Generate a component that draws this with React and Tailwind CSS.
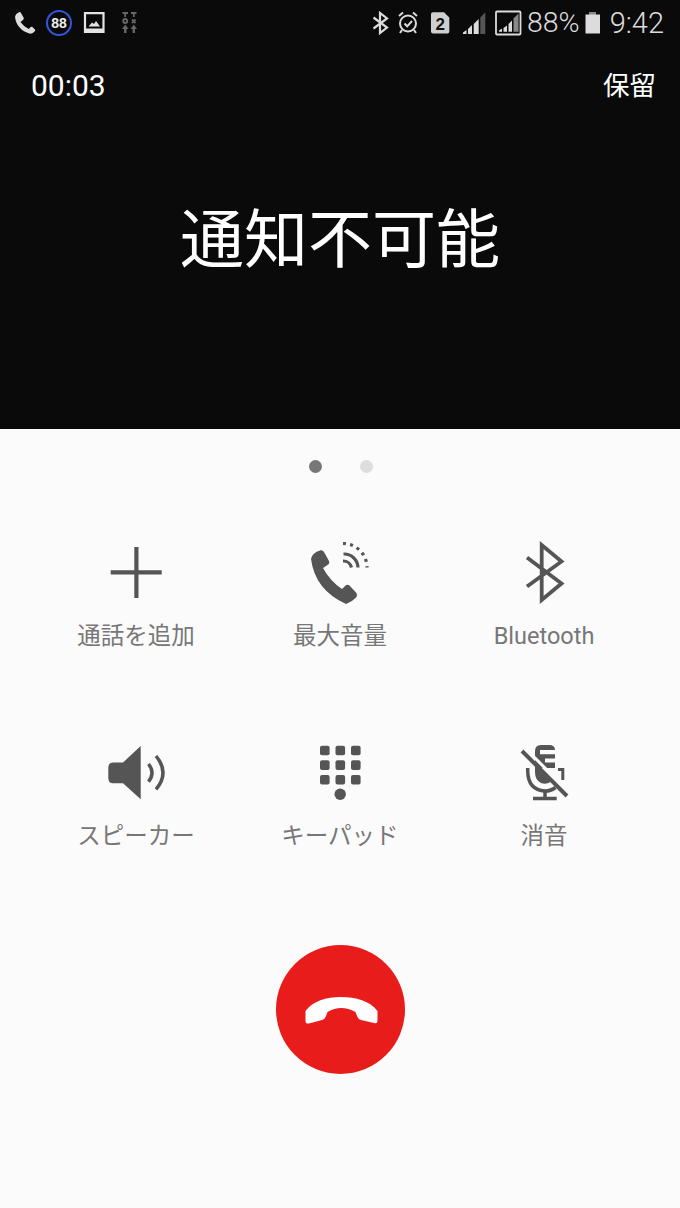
const DARK = "#555555";

function Ic({ x, y, w, h, className = "", children }) {
  return (
    <svg width={w} height={h} viewBox={`${x} ${y} ${w} ${h}`} className={`block shrink-0 ${className}`}>
      {children}
    </svg>
  );
}

function StatusLeft() {
  return (
    <div className="flex items-center">
      <Ic x={14} y={11} w={22} h={24} className="mr-[10px]">
        <path d="M15 17 Q15.5 13.5 19.5 12 Q20.5 11.8 21 13 L23.8 18 Q24 19 23 20 L20.5 22 Q24 27 28.8 29 L30.6 27 Q31.5 26.4 32.4 27 L35 29.5 Q35.5 30.5 34.6 31.5 Q32.5 33.8 30 33.8 Q16.5 29.5 15 17 Z" fill="#dcdcdc" />
      </Ic>
      <div className="mr-[11px] flex h-[26px] w-[26px] items-center justify-center rounded-full border-[2px] border-[#3355dd]">
        <span className="text-[14px] font-bold leading-none text-[#eeeeee] [font-family:'Liberation_Sans',sans-serif]">88</span>
      </div>
      <Ic x={82} y={11} w={23} h={24} className="mr-[15px]">
        <path d="M84 13.2 H102.5 V32 H84 Z" fill="none" stroke="#e4e4e4" strokeWidth="2.2" />
        <rect x="84" y="28.5" width="18.5" height="4" fill="#e4e4e4" />
        <path d="M87.5 26.5 L91 22.5 L93 24 L95 21 L99 26.5 Z" fill="#e4e4e4" />
      </Ic>
      <Ic x={119} y={11} w={18} h={24}>
        <g fill="none" stroke="#666666" strokeWidth="1.8">
          <path d="M120.5 13 H126 M123.2 13 V17" />
          <path d="M129 13 H134.5 M131.8 13 V17" />
          <circle cx="123.2" cy="21" r="2" />
          <path d="M130 19.5 L133.5 23 M133.5 19.5 L130 23" />
        </g>
        <path d="M123.2 24.5 L126.5 29 H124.5 V33 H122 V29 H120 Z M131.8 24.5 L135 29 H133 V33 H130.6 V29 H128.5 Z" fill="#666666" />
      </Ic>
    </div>
  );
}

function StatusRight() {
  return (
    <div className="flex items-center">
      <Ic x={372} y={11} w={17} h={24} className="mr-[8px]">
        <path d="M373.5 17.5 L387 27.5 L380 33 V13 L387 18.5 L373.5 28.5" fill="none" stroke="#dcdcdc" strokeWidth="2.2" />
      </Ic>
      <Ic x={396} y={11} w={22} h={24} className="mr-[12px]">
        <circle cx="407" cy="23.5" r="8" fill="none" stroke="#dcdcdc" strokeWidth="2" />
        <path d="M403.5 23.5 L406.2 26.3 L411 21" fill="none" stroke="#dcdcdc" strokeWidth="2" />
        <path d="M398 16 L402 12.5 M416 16 L412 12.5 M401 30 L399 33 M413 30 L415 33" fill="none" stroke="#dcdcdc" strokeWidth="2" />
      </Ic>
      <Ic x={430} y={11} w={19} h={24} className="mr-[12px]">
        <path d="M430 14 Q430 12.3 432 12.3 H443 L448.3 17.5 V31.5 Q448.3 33.5 446.5 33.5 H432 Q430 33.5 430 31.5 Z" fill="#cfcfcf" />
        <text x="439.3" y="29.8" textAnchor="middle" fontSize="17" fontWeight="700" fill="#111111" fontFamily="Liberation Sans, sans-serif">2</text>
      </Ic>
      <Ic x={460} y={11} w={24} h={24} className="mr-[9px]">
        <polygon points="461,34 464.5,34 464.5,30 461,32.5" fill="#dcdcdc" />
        <polygon points="466,34 470,34 470,25 466,29" fill="#dcdcdc" />
        <polygon points="471.7,34 476.7,34 476.7,19 471.7,24" fill="#dcdcdc" />
        <polygon points="478.3,34 483.3,34 483.3,12.3 478.3,17.5" fill="#555555" />
      </Ic>
      <Ic x={493} y={10} w={27} h={26} className="mr-[5px]">
        <rect x="494" y="11.5" width="24.5" height="23" rx="1" fill="none" stroke="#dcdcdc" strokeWidth="1.8" />
        <polygon points="497,31.7 500,31.7 500,28.5 497,30.5" fill="#dcdcdc" />
        <polygon points="501.5,31.7 505,31.7 505,25.5 501.5,28" fill="#dcdcdc" />
        <polygon points="506.5,31.7 510,31.7 510,20.5 506.5,24" fill="#dcdcdc" />
        <polygon points="511.5,31.7 516.5,31.7 516.5,13.5 511.5,18.5" fill="#888888" />
      </Ic>
      <span className="mr-[4px] text-[28.5px] font-light leading-none text-[#dcdcdc] [font-family:Roboto,sans-serif]">88%</span>
      <Ic x={584} y={11} w={17} h={24} className="mr-[9px]">
        <rect x="589" y="12" width="7" height="3" fill="#888888" />
        <rect x="585.5" y="14.5" width="14.5" height="19" fill="#dcdcdc" />
      </Ic>
      <span className="text-[29px] font-light leading-none text-[#dcdcdc] [font-family:Roboto,sans-serif]">9:42</span>
    </div>
  );
}

function Handset() {
  return (
    <svg width={80} height={34} viewBox="300 992 80 34" className="block">
      <path
        d="M304.5 1010 C312 1000 325 996 340 996 C355 996 369 1000 376.5 1010 V1020 Q376.5 1023 373 1022 L360 1019 Q357 1018 356 1015 L354.5 1011 Q340 1003 326.5 1011 L325 1015 Q324 1018 321 1019 L308 1022.5 Q304.5 1023 304.5 1020 Z"
        fill="#ffffff"
      />
    </svg>
  );
}

const ICONS = {
  plus: (
    <Ic x={100} y={540} w={72} h={68}>
      <path d="M110.7 572.3 H161.7 M136.4 547 V598" stroke={DARK} strokeWidth="4.2" fill="none" />
    </Ic>
  ),
  volume: (
    <Ic x={304} y={540} w={72} h={68}>
      <path
        d="M311 559 Q312 553 320.5 550.3 Q323 550 324 552 L329 561 Q330 563.5 327.5 565 L323 568 Q330 581 342 589 L345.5 585.5 Q347.5 584 349.5 585.5 L356 592.5 Q358 595 356 597.5 Q352 602 346 604 Q315 590 311 559 Z"
        fill={DARK}
      />
      <path d="M343 543.5 A24 24 0 0 1 367 567.5" fill="none" stroke={DARK} strokeWidth="3.2" strokeDasharray="3 4.2" />
      <path d="M343.5 554 A14 14 0 0 1 358 567.5" fill="none" stroke={DARK} strokeWidth="3.2" />
      <path d="M343 561 A8.5 8.5 0 0 1 351.5 567.5" fill="none" stroke={DARK} strokeWidth="3.2" />
    </Ic>
  ),
  bluetooth: (
    <Ic x={508} y={540} w={72} h={68}>
      <path d="M527 557.5 L561.5 583.5 L541.7 600 V545 L561.5 561.5 L527 586.5" fill="none" stroke={DARK} strokeWidth="3.8" />
    </Ic>
  ),
  speaker: (
    <Ic x={100} y={740} w={72} h={68}>
      <path d="M140.7 746 V799.3 L123 783.3 H113 Q108.3 783.3 108.3 778 V768 Q108.3 762.5 113 762.5 H123 Z" fill={DARK} />
      <path d="M148.5 764 Q155.5 772.7 148.5 781.7" fill="none" stroke={DARK} strokeWidth="3.5" />
      <path d="M156 756 Q170 772.7 156 789.3" fill="none" stroke={DARK} strokeWidth="3.5" />
    </Ic>
  ),
  keypad: (
    <Ic x={304} y={740} w={72} h={68}>
      {[320, 335.5, 351].map((cx) =>
        [745.7, 760.3, 775].map((cy) => (
          <rect key={`${cx}-${cy}`} x={cx} y={cy} width="9.6" height="9.6" rx="2" fill={DARK} />
        ))
      )}
      <circle cx="340.2" cy="794.3" r="5.7" fill={DARK} />
    </Ic>
  ),
  mute: (
    <Ic x={508} y={740} w={72} h={68}>
      <path d="M535 762 V751 Q535 745 541 745 H549 Q555 745 555 750 H540 V754.3 H555 V758.5 H545 V762.5 H555 V768 H540 Z" fill={DARK} />
      <path d="M535 765 L552 781 Q547 785 541 783 Q535 780 535 772 Z" fill={DARK} />
      <path d="M527.7 768 V771 Q528 790 545 791 Q551 791 555.5 787.5" fill="none" stroke={DARK} strokeWidth="3.5" />
      <path d="M558 769.5 H562.8 V780" fill="none" stroke={DARK} strokeWidth="3" />
      <path d="M545 791 V798 M533 798.5 H556.7" stroke={DARK} strokeWidth="3.5" fill="none" />
      <path d="M525 748 L570 793" stroke="#fbfbfb" strokeWidth="3" fill="none" />
      <path d="M522 751 L567 796" stroke={DARK} strokeWidth="4" fill="none" />
    </Ic>
  ),
};

const ACTIONS = [
  { icon: "plus", label: "通話を追加" },
  { icon: "volume", label: "最大音量" },
  { icon: "bluetooth", label: "Bluetooth" },
  { icon: "speaker", label: "スピーカー" },
  { icon: "keypad", label: "キーパッド" },
  { icon: "mute", label: "消音" },
];

export default function App() {
  return (
    <div className="flex h-[1208px] w-[680px] flex-col overflow-hidden bg-[#fbfbfb] [font-family:'Noto_Sans_CJK_JP',sans-serif]">
      <header className="flex h-[429px] shrink-0 flex-col bg-[#0a0a0a]">
        <div className="flex h-[46px] items-center justify-between pl-[14px] pr-[16px]">
          <StatusLeft />
          <StatusRight />
        </div>
        <div className="mt-[18px] flex items-center justify-between pl-[31px] pr-[24px] text-white">
          <span className="text-[30px] leading-[44px] [font-family:Roboto,sans-serif]">00:03</span>
          <span className="-translate-y-[2px] text-[26.5px] leading-[44px]">保留</span>
        </div>
        <h1 className="mt-[80px] text-center text-[64px] font-normal leading-[92px] text-white">通知不可能</h1>
      </header>

      <div className="mt-[31px] flex justify-center gap-[38px] pl-[2px]">
        <span className="h-[13px] w-[13px] rounded-full bg-[#777777]" />
        <span className="h-[13px] w-[13px] rounded-full bg-[#dddddd]" />
      </div>

      <div className="mt-[67px] grid grid-cols-3 gap-y-[28px] px-[34px]">
        {ACTIONS.map((a) => (
          <div key={a.icon} className="flex h-[172px] flex-col items-center">
            {ICONS[a.icon]}
            <span className="mt-[10px] whitespace-nowrap text-[23.5px] leading-[36px] text-[#777777] [font-family:Roboto,'Noto_Sans_CJK_JP',sans-serif]">
              {a.label}
            </span>
          </div>
        ))}
      </div>

      <div className="mt-[33px] flex justify-center pl-px">
        <button className="flex h-[129px] w-[129px] items-center justify-center rounded-full bg-[#e91c1c]">
          <Handset />
        </button>
      </div>
    </div>
  );
}
